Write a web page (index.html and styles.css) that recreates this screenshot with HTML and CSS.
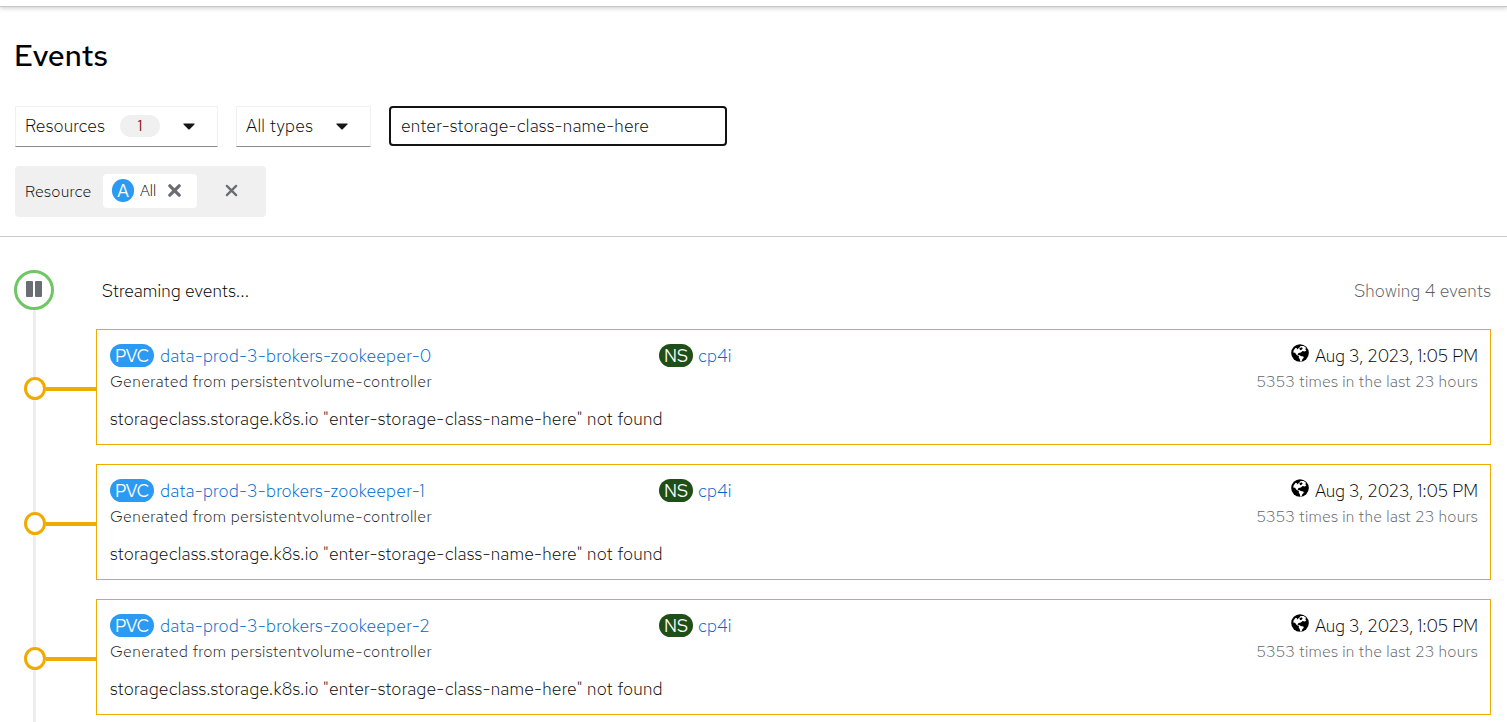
FILE: index.html
```html
<!DOCTYPE html>
<html lang="en">
<head>
<meta charset="utf-8">
<title>Events</title>
<link rel="stylesheet" href="styles.css">
</head>
<body>
<svg class="defs" width="0" height="0">
  <symbol id="caret" viewBox="0 0 12 7"><path d="M1 .5h10c.6 0 .8.6.4 1L6.7 6.200a1 1 0 0 1-1.400 0L.6 1.500C.2 1.100.4.5 1 .5z"/></symbol>
  <symbol id="times" viewBox="0 0 12 12"><path d="M1.700 1.700l8.600 8.600M10.300 1.700l-8.600 8.600"/></symbol>
  <symbol id="globe" viewBox="0 0 18 18"><circle cx="9" cy="9" r="8.800"/><path fill="#fff" d="M9.500 1.900l3.200.2 2.300 1.700-.6 1.500.9 1.200-1.500.9-2.200-.4-1.700 1.600-2.200.5-1.200 1.200.7 1 1.600-.1.900.9 2.600.5.500 1.100-1.500 1.500-.6 1.900-1.200.6-.8-2.600-1-1.500.2-1.300-2.500-1.500-1.300-2-1.900-.2.500-2.400 2-2.500 1.300.6-.2 1.400 1.300-1.200 1-.6z"/><path d="M8.300 4.500l2-1.200 1.400 1-.7 1.300-1.700.6z"/></symbol>
</svg>
<div class="masthead"></div>
<header class="page-head">
  <h1 class="title">Events</h1>
  <div class="filters">
    <div class="select select-resources"><span class="t-resources">Resources</span><span class="count">1</span><svg class="caret"><use href="#caret"/></svg></div>
    <div class="select select-types"><span class="t-types">All types</span><svg class="caret"><use href="#caret"/></svg></div>
    <div class="search"><span class="t-search">enter-storage-class-name-here</span></div>
  </div>
  <div class="chip-group">
    <span class="chip-label">Resource</span>
    <div class="chip"><span class="badge-all">A</span><span class="chip-text">All</span><svg class="times bold"><use href="#times"/></svg></div>
    <svg class="times"><use href="#times"/></svg>
  </div>
</header>
<main class="stream">
  <div class="stream-head">
    <div class="pause"><i></i><i></i></div>
    <span class="t-streaming">Streaming events...</span>
    <span class="t-showing">Showing 4 events</span>
  </div>
  <div class="events">
    <div class="event">
      <div class="rail"><span class="node"></span><span class="link"></span></div>
      <article class="card">
        <div class="row">
          <div class="res"><span class="badge pvc">PVC</span><a class="t-name">data-prod-3-brokers-zookeeper-0</a></div>
          <div class="ns"><span class="badge nsb">NS</span><a class="t-ns">cp4i</a></div>
          <div class="time"><svg class="globe"><use href="#globe"/></svg><span class="t-date">Aug 3, 2023, 1:05 PM</span></div>
        </div>
        <div class="row sub"><span class="t-from">Generated from persistentvolume-controller</span><span class="t-times">5353 times in the last 23 hours</span></div>
        <p class="msg">storageclass.storage.k8s.io "enter-storage-class-name-here" not found</p>
      </article>
    </div>
    <div class="event">
      <div class="rail"><span class="node"></span><span class="link"></span></div>
      <article class="card">
        <div class="row">
          <div class="res"><span class="badge pvc">PVC</span><a class="t-name">data-prod-3-brokers-zookeeper-1</a></div>
          <div class="ns"><span class="badge nsb">NS</span><a class="t-ns">cp4i</a></div>
          <div class="time"><svg class="globe"><use href="#globe"/></svg><span class="t-date">Aug 3, 2023, 1:05 PM</span></div>
        </div>
        <div class="row sub"><span class="t-from">Generated from persistentvolume-controller</span><span class="t-times">5353 times in the last 23 hours</span></div>
        <p class="msg">storageclass.storage.k8s.io "enter-storage-class-name-here" not found</p>
      </article>
    </div>
    <div class="event">
      <div class="rail"><span class="node"></span><span class="link"></span></div>
      <article class="card">
        <div class="row">
          <div class="res"><span class="badge pvc">PVC</span><a class="t-name">data-prod-3-brokers-zookeeper-2</a></div>
          <div class="ns"><span class="badge nsb">NS</span><a class="t-ns">cp4i</a></div>
          <div class="time"><svg class="globe"><use href="#globe"/></svg><span class="t-date">Aug 3, 2023, 1:05 PM</span></div>
        </div>
        <div class="row sub"><span class="t-from">Generated from persistentvolume-controller</span><span class="t-times">5353 times in the last 23 hours</span></div>
        <p class="msg">storageclass.storage.k8s.io "enter-storage-class-name-here" not found</p>
      </article>
    </div>
  </div>
</main>
</body>
</html>
```
FILE: styles.css
```css
* { box-sizing: border-box; }
body { margin: 0; height: 722px; overflow: hidden; background: #fff; color: #080808; font: 300 17.6px/24px "Red Hat Text", Inter, "Liberation Sans", sans-serif; white-space: nowrap; letter-spacing: .15px; }
.defs { display: block; height: 0; }
.masthead { height: 7px; border-bottom: 1px solid #c8c8c8; box-shadow: 0 1px 5px rgba(0,0,0,.22); }
.page-head { height: 230px; padding: 29px 15px 0 15px; border-bottom: 1px solid #ccc; }
.title { margin: 0 0 0 -1px; height: 40px; font-size: 30px; line-height: 39px; font-weight: 500; color: #000; letter-spacing: 0; }
.filters { display: flex; gap: 18px; margin-top: 30px; height: 41px; }
.select { display: flex; align-items: center; height: 41px; border: 1px solid #f0f0f0; border-bottom-color: #8a8d90; padding: 0 22px 2px 9px; }
.select-resources { width: 203px; }
.select-types { width: 135px; }
.t-types { letter-spacing: .25px; }
.count { width: 40px; height: 22px; margin-left: auto; margin-right: 23px; border-radius: 11px; background: #f0f0f0; color: #7d1007; font-size: 16px; line-height: 22px; text-align: center; font-weight: 400; }
.caret { width: 12px; height: 7px; margin-top: 1px; fill: #151515; }
.select-types .caret { margin-left: auto; }
.search { width: 338px; height: 40px; border: 2px solid #101214; border-radius: 4px; padding: 0 10px; line-height: 35px; letter-spacing: .2px; }
.chip-group { display: flex; align-items: center; width: 251px; height: 51px; margin-top: 19px; padding: 0 10px 2px; border-radius: 4px; background: #f0f0f0; }
.chip-label { width: 78px; font-size: 16px; padding-top: 2px; letter-spacing: .25px; }
.chip { display: flex; align-items: center; width: 94px; height: 34px; padding-left: 9px; border-radius: 4px; background: #fff; margin-right: 28px; }
.badge-all { width: 22px; height: 23px; border-radius: 12px; background: #2b9af3; color: #fff; font-size: 17.6px; line-height: 23px; text-align: center; font-weight: 400; letter-spacing: 0; }
.chip-text { width: 17px; margin: 0 11px 0 6px; font-size: 15.4px; letter-spacing: 0; }
.times { width: 13px; height: 13px; fill: none; stroke: #6a6e73; stroke-width: 2.100; stroke-linecap: round; }
.times.bold { stroke-width: 3; }
.stream { padding: 33px 16px 0 14px; }
.stream-head { display: flex; align-items: center; height: 40px; }
.pause { display: flex; align-items: center; justify-content: center; gap: 2px; width: 40px; height: 40px; margin-right: 48px; border: 3px solid #6ec664; border-radius: 50%; }
.pause i { width: 7px; height: 16px; margin-bottom: 2px; border-radius: 1px; background: #6a6e73; }
.t-streaming, .t-showing { padding-top: 2px; }
.t-streaming { color: #000; letter-spacing: .1px; }
.t-showing { margin-left: auto; color: #5a5e63; }
.events { height: 412px; padding-top: 19px; background: linear-gradient(#ededed, #ededed) 19px 0 / 3px 100% no-repeat; }
.event { display: flex; height: 116px; margin-bottom: 19px; }
.rail { display: flex; align-items: center; width: 82px; padding: 3px 0 0 10px; }
.node { width: 22px; height: 23px; border: 3px solid #f0ab00; border-radius: 50%; background: #fff; }
.link { flex: 1; height: 4px; background: #f0ab00; }
.card { flex: 1; height: 116px; padding: 12px 12px 0 13px; border: 1px solid #f0ab00; }
.row { display: flex; align-items: center; height: 26px; }
.res { display: flex; align-items: center; width: 549px; }
.ns, .time { display: flex; align-items: center; }
.time { margin-left: auto; }
.badge { height: 23px; border-radius: 12px; color: #fff; line-height: 23px; text-align: center; margin-right: 5px; font-weight: 400; letter-spacing: 0; }
.pvc { width: 44px; margin-right: 6px; background: #2b9af3; letter-spacing: -.3px; }
.nsb { width: 34px; background: #1e4f18; }
.t-name, .t-ns, .t-date { padding-top: 2px; }
.t-name, .t-ns { color: #06c; }
.t-name { letter-spacing: .21px; }
.t-date { letter-spacing: -.14px; }
.globe { width: 18px; height: 18px; margin: 0 6px 5px 0; fill: #000; }
.sub { padding-top: 2px; font-size: 16px; justify-content: space-between; color: #222426; }
.t-from { letter-spacing: .37px; }
.t-times { color: #62666b; letter-spacing: .22px; }
.msg { margin: 13px 0 0; line-height: 24px; letter-spacing: .2px; }
```
